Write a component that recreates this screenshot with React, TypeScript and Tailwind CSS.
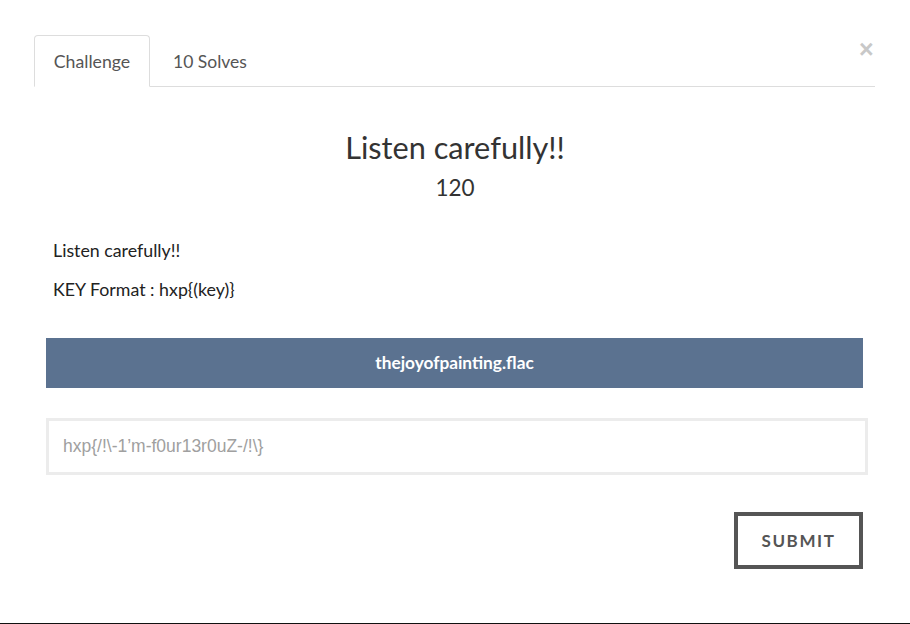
export default function App() {
  return (
    <div
      className="relative w-[910px] h-[624px] bg-white overflow-hidden border-b border-[#111]"
      style={{ fontFamily: "Lato, 'Noto Sans', sans-serif" }}
    >
      <button className="absolute left-[859px] top-[37px] text-[25px] leading-none font-bold text-[#c8c8c8]" style={{ fontFamily: "'Liberation Sans', Arial, sans-serif" }}>
        ×
      </button>
      <div className="pt-[35px] pl-[34px]">
        <div className="flex w-[841px] border-b border-[#dddddd]">
          <div className="w-[116px] h-[52px] -mb-px flex items-center justify-center pt-[2px] border border-[#dddddd] border-b-white rounded-t-[4px] bg-white text-[17.7px] text-[#555]">
            Challenge
          </div>
          <div className="h-[51px] flex items-center pt-[3px] pl-[23px] text-[17.5px] text-[#555]">
            10 Solves
          </div>
        </div>
      </div>
      <div className="flex flex-col items-center pt-[43px] text-[#333]">
        <h1 className="text-[30.7px] leading-[36px]">Listen carefully!!</h1>
        <div className="text-[22.5px] leading-[26px] mt-[9px]">120</div>
      </div>
      <div className="pl-[53px] pt-[37px] text-[17.8px] text-[#222]">
        <p className="leading-[24px]">Listen carefully!!</p>
        <p className="leading-[24px] mt-[15px]">KEY Format : hxp{"{(key)}"}</p>
      </div>
      <div className="ml-[46px] mt-[37px] w-[817px] h-[50px] bg-[#5b7290] flex items-center justify-center text-white font-bold text-[17.3px]">
        thejoyofpainting.flac
      </div>
      <div className="ml-[46px] mt-[30px] w-[822px] h-[57px] border-[3px] border-[#ececec] flex items-center pl-[14px]">
        <span className="text-[17.5px] text-[#a0a0a0]" style={{ fontFamily: "'Liberation Sans', Arial, sans-serif" }}>
          hxp{"{/!\\-1’m-f0ur13r0uZ-/!\\}"}
        </span>
      </div>
      <div className="flex justify-end w-[863px] mt-[37px]">
        <button className="w-[129px] h-[57px] border-[4px] border-[#555] text-[#555] font-bold text-[17px] tracking-[1.6px] flex items-center justify-center">
          SUBMIT
        </button>
      </div>
    </div>
  );
}
